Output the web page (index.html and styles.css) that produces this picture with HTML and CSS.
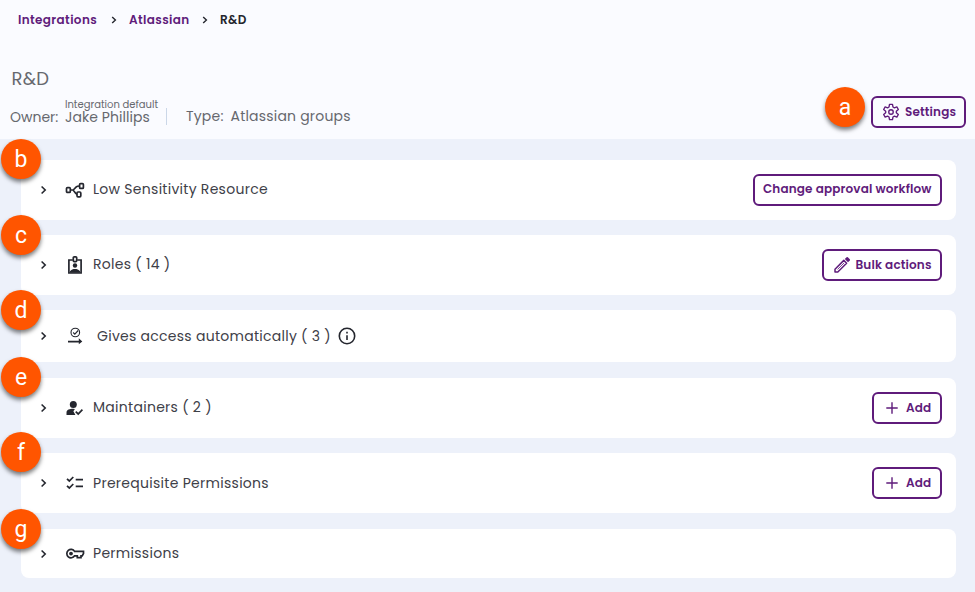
FILE: index.html
```html
<!DOCTYPE html>
<html lang="en">
<head>
    <meta charset="UTF-8">
    <meta name="viewport" content="width=device-width, initial-scale=1.0">
    <title>R&amp;D</title>
    <link rel="stylesheet" href="styles.css">
</head>
<body>
    <header class="header">
        <nav class="breadcrumbs">
            <a class="crumb crumb-root">Integrations</a>
            <svg class="crumb-sep" viewBox="0 0 8 8"><path d="M2.2 1L5.4 4L2.2 7"/></svg>
            <a class="crumb crumb-parent">Atlassian</a>
            <svg class="crumb-sep" viewBox="0 0 8 8"><path d="M2.2 1L5.4 4L2.2 7"/></svg>
            <span class="crumb current">R&amp;D</span>
        </nav>
        <h1>R&amp;D</h1>
        <div class="details">
            <span class="owner-label">Owner:</span>
            <div class="owner">
                <small>Integration default</small>
                <span class="owner-name">Jake Phillips</span>
            </div>
            <div class="divider"></div>
            <span class="type-label">Type:</span>
            <span class="type-value">Atlassian groups</span>
            <div class="settings">
                <span class="marker">a</span>
                <button class="btn btn-settings">
                    <svg class="gear" viewBox="0 0 24 24"><path d="M10 1.800h4l.6 3.500 2 1.100 3.200-1.200 2 3.500-2.700 2.300v2l2.700 2.300-2 3.500-3.200-1.200-2 1.100-.6 3.500h-4l-.6-3.500-2-1.100-3.200 1.200-2-3.500 2.700-2.300v-2L2.200 8.700l2-3.500 3.200 1.200 2-1.100z"/><circle cx="12" cy="12" r="3"/></svg>
                    <span>Settings</span>
                </button>
            </div>
        </div>
    </header>

    <main class="sections">
        <section class="card workflow">
            <span class="marker">b</span>
            <svg class="chevron" viewBox="0 0 8 10"><path d="M1.600 1.500L5.200 5L1.600 8.500"/></svg>
            <svg class="icon" viewBox="0 0 20 20"><g class="line"><rect x="1.500" y="7.600" width="3.800" height="4.800" rx="1"/><rect x="14.600" y="3.600" width="3.800" height="4.800" rx="1"/><rect x="12" y="12" width="3.800" height="4.800" rx="1"/><path d="M5.500 10H8.600M8.200 10L11.300 6.900Q12.200 6 14.400 6M8.200 10L10.600 13.200Q11.200 14 12 14.200"/></g></svg>
            <h2>Low Sensitivity Resource</h2>
            <button class="btn btn-workflow">Change approval workflow</button>
        </section>

        <section class="card roles">
            <span class="marker">c</span>
            <svg class="chevron" viewBox="0 0 8 10"><path d="M1.600 1.500L5.200 5L1.600 8.500"/></svg>
            <svg class="icon" viewBox="0 0 20 20"><g class="line"><path d="M7.800 5H3.900v13h12.200V5h-3.900"/><rect x="8.300" y="1.800" width="3.400" height="4.800" rx="1"/></g><circle cx="10" cy="10.500" r="2.200"/><path d="M5 17.800v-1.500c1.200-1.800 3.200-2.300 5-2.300s3.800.5 5 2.300v1.500z"/></svg>
            <h2>Roles ( 14 )</h2>
            <button class="btn btn-bulk">
                <svg class="pencil" viewBox="0 0 18 18"><path d="M2 16v-2.800L10.800 4.400l2.800 2.800L4.800 16z"/><path class="groove" d="M4.600 13.400L11 7"/><path class="solid" d="M11.800 3L13.600 1.200q.6-.5 1.200 0l2 2q.5.600 0 1.200L15 6.200z"/></svg>
                <span>Bulk actions</span>
            </button>
        </section>

        <section class="card access">
            <span class="marker">d</span>
            <svg class="chevron" viewBox="0 0 8 10"><path d="M1.600 1.500L5.200 5L1.600 8.500"/></svg>
            <svg class="icon" viewBox="0 0 20 20"><g class="thin"><circle cx="10.300" cy="6.500" r="4.300"/><path d="M8.200 6.500L9.800 8.100L13.200 4.500"/></g><path d="M3 14.700h10.800v-2.500l3.500 3.300-3.500 2.800v-1.900H3z"/></svg>
            <h2>Gives access automatically ( 3 )</h2>
            <svg class="info" viewBox="0 0 18 18"><circle cx="9" cy="9" r="7.700"/><path d="M9 8.200v4.800M9 4.800v1.700"/></svg>
        </section>

        <section class="card maintainers">
            <span class="marker">e</span>
            <svg class="chevron" viewBox="0 0 8 10"><path d="M1.600 1.500L5.200 5L1.600 8.500"/></svg>
            <svg class="icon" viewBox="0 0 20 20"><circle cx="8.300" cy="6.600" r="3.500"/><path d="M1.500 17v-2.300c0-3 3.300-3.900 6.600-3.900l1.800.1-1.500 2.300 2 3.800z"/><path class="line" d="M10.700 13.700L13.200 16L17.400 11.700"/></svg>
            <h2>Maintainers ( 2 )</h2>
            <button class="btn btn-add">
                <svg class="plus" viewBox="0 0 12 12"><path d="M6 .3v11.400M.3 6h11.400"/></svg>
                <span>Add</span>
            </button>
        </section>

        <section class="card prerequisites">
            <span class="marker">f</span>
            <svg class="chevron" viewBox="0 0 8 10"><path d="M1.600 1.500L5.200 5L1.600 8.500"/></svg>
            <svg class="icon" viewBox="0 0 20 20"><path class="line" d="M2 5.900L4.300 8L8.300 4M2 12.900L4.300 15L8.300 11M10.700 6.600H18M10.700 13.400H18"/></svg>
            <h2>Prerequisite Permissions</h2>
            <button class="btn btn-add">
                <svg class="plus" viewBox="0 0 12 12"><path d="M6 .3v11.400M.3 6h11.400"/></svg>
                <span>Add</span>
            </button>
        </section>

        <section class="card permissions">
            <span class="marker">g</span>
            <svg class="chevron" viewBox="0 0 8 10"><path d="M1.600 1.500L5.200 5L1.600 8.500"/></svg>
            <svg class="icon" viewBox="0 0 20 20"><path class="line" d="M9.600 7.400A4.200 4.200 0 1 0 9.600 11.800H12.300V13.600H16V11.800H17.200L18.500 9.500V7.400Z"/><circle cx="6" cy="9.600" r="1.900"/></svg>
            <h2>Permissions</h2>
        </section>
    </main>
</body>
</html>
```
FILE: styles.css
```css
* {
    box-sizing: border-box;
}

body {
    margin: 0;
    min-height: 592px;
    background-color: #edf1fa;
    color: #24262e;
    font-family: Poppins, Inter, "Open Sans", sans-serif;
    overflow: hidden;
}

svg {
    flex: none;
    display: block;
    fill: none;
    stroke: currentColor;
}

.header {
    height: 139px;
    padding: 11px 9px 0 10px;
    background-color: #fafbff;
    color: #66686e;
}

.breadcrumbs {
    display: flex;
    align-items: center;
    height: 18px;
    padding-left: 8px;
    font-size: 12px;
    font-weight: 600;
    letter-spacing: 0.38px;
}

.crumb {
    color: #5f1b7b;
    white-space: nowrap;
}

.crumb-root {
    width: 80px;
}

.crumb-parent {
    width: 60px;
}

.current {
    color: #24262e;
}

.crumb-sep {
    width: 8px;
    height: 8px;
    margin: 0 11.5px;
    color: #24262e;
    stroke-width: 1.4;
}

h1 {
    margin: 38px 0 0 1.5px;
    font-size: 18px;
    line-height: 24px;
    font-weight: 400;
    letter-spacing: 0.2px;
}

.details {
    display: flex;
    height: 37px;
    margin-top: 5px;
    font-size: 14px;
    line-height: 20px;
    white-space: nowrap;
}

.owner-label {
    width: 55px;
    padding-top: 11px;
}

.owner {
    display: flex;
    flex-direction: column;
    width: 101px;
}

.owner small {
    height: 12px;
    padding-top: 4px;
    font-size: 10px;
    line-height: 10px;
}

.owner-name {
    line-height: 18px;
    letter-spacing: 0.05px;
}

.divider {
    width: 1px;
    height: 17px;
    margin: 12px 19px 0 0;
    background-color: #cbd7e8;
}

.type-label {
    width: 44.5px;
    padding-top: 10px;
    letter-spacing: 0.2px;
}

.type-value {
    padding-top: 10px;
    letter-spacing: 0.2px;
}

.settings {
    position: relative;
    margin-left: auto;
}

.btn {
    display: flex;
    align-items: center;
    height: 32px;
    margin: 0 0 0 auto;
    padding: 0 8px;
    border: 2px solid #5f1b7b;
    border-radius: 6px;
    background-color: transparent;
    color: #5f1b7b;
    font-family: inherit;
    font-size: 12px;
    font-weight: 600;
    letter-spacing: 0.15px;
    white-space: nowrap;
}

.btn-settings {
    width: 95px;
}

.gear {
    width: 18px;
    height: 18px;
    margin: 0 5px 0 1px;
    stroke-width: 1.8;
    stroke-linejoin: round;
}

.btn-workflow {
    width: 189px;
    padding-bottom: 2px;
}

.btn-bulk {
    width: 120px;
}

.pencil {
    width: 18px;
    height: 18px;
    margin: 0 4.5px 0 1px;
    stroke-width: 1.5;
    stroke-linejoin: round;
}

.pencil .groove {
    stroke-width: 0.8;
}

.pencil .solid {
    fill: currentColor;
    stroke: none;
}

.btn-add {
    width: 70px;
}

.plus {
    width: 12px;
    height: 12px;
    margin: 0 8px 0 4px;
    stroke-width: 1.4;
}

.sections {
    padding: 21px 19px 0 21px;
}

.card {
    position: relative;
    display: flex;
    align-items: center;
    height: 60px;
    margin-bottom: 15px;
    padding: 0 14px 0 18px;
    border-radius: 8px;
    background-color: #fff;
}

.access {
    height: 52px;
    margin-bottom: 16px;
}

.prerequisites {
    margin-bottom: 16px;
}

.permissions {
    height: 49px;
}

.chevron {
    width: 8px;
    height: 10px;
    margin-left: 1px;
    stroke-width: 1.6;
}

.icon {
    width: 20px;
    height: 20px;
    margin: 0 8px 0 17px;
    fill: currentColor;
    stroke: none;
}

.icon .line {
    fill: none;
    stroke: currentColor;
    stroke-width: 1.7;
}

.icon .thin {
    fill: none;
    stroke: currentColor;
    stroke-width: 1.1;
}

.info {
    width: 18px;
    height: 18px;
    margin-left: 7px;
    stroke-width: 1.6;
}

h2 {
    margin: 0;
    padding-bottom: 2px;
    font-size: 14px;
    line-height: 20px;
    font-weight: 400;
    letter-spacing: 0.28px;
    color: #3e4048;
    white-space: nowrap;
}

.access h2 {
    margin-left: 4px;
    padding-bottom: 0;
    letter-spacing: 0.27px;
}

.prerequisites h2 {
    padding-bottom: 0;
}

/* step letters over the corners */
.marker {
    position: absolute;
    top: -20px;
    left: -20px;
    z-index: 1;
    width: 40px;
    height: 40px;
    border-radius: 50%;
    background-color: #ff5500;
    box-shadow: 0 3px 4px rgba(0, 0, 0, 0.5);
    color: #fff;
    font-family: Roboto, sans-serif;
    font-size: 23px;
    line-height: 41px;
    text-align: center;
}

.workflow .marker,
.maintainers .marker,
.prerequisites .marker {
    top: -21px;
}

.settings .marker {
    top: -9px;
    left: -46px;
}
```
